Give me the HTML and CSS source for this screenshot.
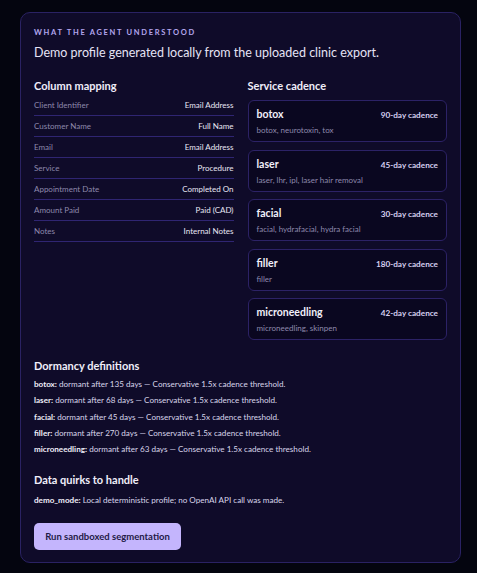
FILE: index.html
```html
<!DOCTYPE html>
<html lang="en">
<head>
  <meta charset="UTF-8">
  <meta name="viewport" content="width=device-width, initial-scale=1.0">
  <title>Agent profile</title>
  <link rel="stylesheet" href="styles.css">
</head>
<body>
  <div class="panel">
    <div class="eyebrow">What the agent understood</div>
    <p class="summary">Demo profile generated locally from the uploaded clinic export.</p>

    <div class="columns">
      <div class="mapping">
        <h3>Column mapping</h3>
        <ul class="map-list">
          <li><span class="key">Client Identifier</span><span class="val">Email Address</span></li>
          <li><span class="key">Customer Name</span><span class="val">Full Name</span></li>
          <li><span class="key">Email</span><span class="val">Email Address</span></li>
          <li><span class="key">Service</span><span class="val">Procedure</span></li>
          <li><span class="key">Appointment Date</span><span class="val">Completed On</span></li>
          <li><span class="key">Amount Paid</span><span class="val">Paid (CAD)</span></li>
          <li><span class="key">Notes</span><span class="val">Internal Notes</span></li>
        </ul>
      </div>

      <div class="cadence">
        <h3>Service cadence</h3>
        <div class="svc-list">
          <div class="svc">
            <div class="svc-top"><span class="svc-name">botox</span><span class="svc-days">90-day cadence</span></div>
            <div class="svc-alias">botox, neurotoxin, tox</div>
          </div>
          <div class="svc">
            <div class="svc-top"><span class="svc-name">laser</span><span class="svc-days">45-day cadence</span></div>
            <div class="svc-alias">laser, lhr, ipl, laser hair removal</div>
          </div>
          <div class="svc">
            <div class="svc-top"><span class="svc-name">facial</span><span class="svc-days">30-day cadence</span></div>
            <div class="svc-alias">facial, hydrafacial, hydra facial</div>
          </div>
          <div class="svc">
            <div class="svc-top"><span class="svc-name">filler</span><span class="svc-days">180-day cadence</span></div>
            <div class="svc-alias">filler</div>
          </div>
          <div class="svc">
            <div class="svc-top"><span class="svc-name">microneedling</span><span class="svc-days">42-day cadence</span></div>
            <div class="svc-alias">microneedling, skinpen</div>
          </div>
        </div>
      </div>
    </div>

    <div class="section dormancy">
      <h3>Dormancy definitions</h3>
      <ul class="notes">
        <li><b>botox:</b> dormant after 135 days — Conservative 1.5x cadence threshold.</li>
        <li><b>laser:</b> dormant after 68 days — Conservative 1.5x cadence threshold.</li>
        <li><b>facial:</b> dormant after 45 days — Conservative 1.5x cadence threshold.</li>
        <li><b>filler:</b> dormant after 270 days — Conservative 1.5x cadence threshold.</li>
        <li><b>microneedling:</b> dormant after 63 days — Conservative 1.5x cadence threshold.</li>
      </ul>
    </div>

    <div class="section quirks">
      <h3>Data quirks to handle</h3>
      <ul class="notes">
        <li><b>demo_mode:</b> Local deterministic profile; no OpenAI API call was made.</li>
      </ul>
    </div>

    <button class="run-btn" type="button">Run sandboxed segmentation</button>
  </div>
</body>
</html>
```

FILE: styles.css
```css
* {
  box-sizing: border-box;
}
html, body {
  margin: 0;
  padding: 0;
}
body {
  background: #04050f;
  font-family: "Lato", "Open Sans", sans-serif;
  color: #e6e3f5;
  padding: 12px 16px 0 20px;
}
ul, li {
  padding: 0;
  margin: 0;
  list-style-type: none;
}
h3 {
  margin: 0;
  font-size: 11px;
  line-height: 15px;
  font-weight: 700;
  color: #f0eef9;
}

.panel {
  width: 441px;
  background: #0f0b29;
  border: 1px solid #2a2263;
  border-radius: 10px;
  padding: 13px 13px 12px;
}
.eyebrow {
  font-size: 7.5px;
  line-height: 12px;
  font-weight: 700;
  letter-spacing: 1.7px;
  text-transform: uppercase;
  color: #b3a6ee;
  margin-top: 1px;
}
.summary {
  margin: 6px 0 0;
  font-size: 12.5px;
  line-height: 16px;
  color: #e6e3f5;
}

.columns {
  display: grid;
  grid-template-columns: 1fr 1fr;
  column-gap: 14px;
  margin-top: 17px;
}
.mapping h3 {
  margin-bottom: 2px;
}
.map-list li {
  display: flex;
  justify-content: space-between;
  padding: 5px 0 4px;
  font-size: 8px;
  line-height: 11px;
  border-bottom: 1px solid #2f2572;
}
.map-list .key {
  color: #8e89ac;
}
.map-list .val {
  color: #e8e6f4;
}

.cadence h3 {
  margin-bottom: 7px;
}
.svc-list {
  display: flex;
  flex-direction: column;
  gap: 7.5px;
}
.svc {
  height: 42px;
  background: #0a0720;
  border: 1px solid #2c2266;
  border-radius: 6px;
  padding: 6px 8px;
}
.svc-top {
  display: flex;
  justify-content: space-between;
  align-items: baseline;
  line-height: 14px;
}
.svc-name {
  font-size: 10.5px;
  font-weight: 700;
  color: #f2f0fa;
}
.svc-days {
  font-size: 8.2px;
  font-weight: 700;
  color: #d6d0f0;
}
.svc-alias {
  margin-top: 2px;
  font-size: 8px;
  line-height: 12px;
  color: #8e89ac;
}

.section h3 {
  margin-bottom: 3px;
}
.dormancy {
  margin-top: 18px;
}
.quirks {
  margin-top: 15px;
}
.notes li {
  font-size: 8.1px;
  line-height: 16.25px;
  color: #d8d5ea;
}
.notes b {
  color: #f0eef9;
}
.quirks h3 {
  margin-bottom: 5px;
}

.run-btn {
  display: block;
  margin-top: 14px;
  height: 27px;
  width: 147px;
  padding: 0;
  border: 0;
  border-radius: 5px;
  background: #c4b5fd;
  color: #1f1a47;
  font-family: inherit;
  font-size: 9.5px;
  font-weight: 700;
}
```
